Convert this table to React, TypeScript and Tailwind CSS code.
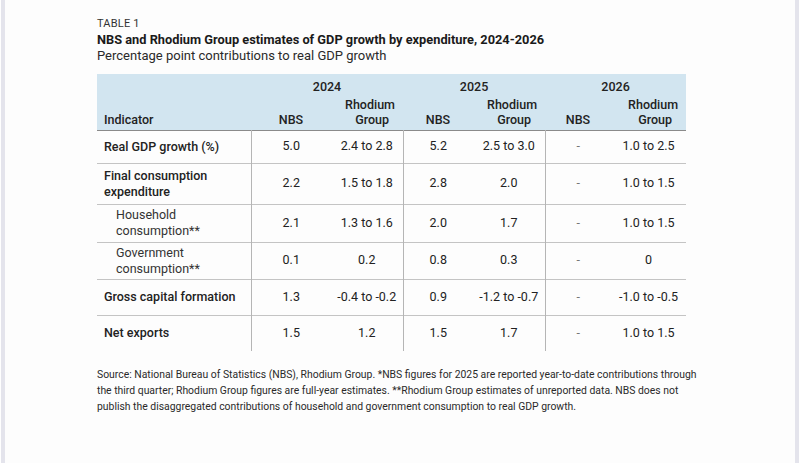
import React from 'react';

interface Row {
  label: string[];
  bold?: boolean;
  indent?: boolean;
  values: string[];
  h: string;
}

const rows: Row[] = [
  { label: ['Real GDP growth (%)'], bold: true, values: ['5.0', '2.4 to 2.8', '5.2', '2.5 to 3.0', '-', '1.0 to 2.5'], h: 'h-[33px]' },
  { label: ['Final consumption', 'expenditure'], bold: true, values: ['2.2', '1.5 to 1.8', '2.8', '2.0', '-', '1.0 to 1.5'], h: 'h-[41px]' },
  { label: ['Household', 'consumption**'], indent: true, values: ['2.1', '1.3 to 1.6', '2.0', '1.7', '-', '1.0 to 1.5'], h: 'h-[38px]' },
  { label: ['Government', 'consumption**'], indent: true, values: ['0.1', '0.2', '0.8', '0.3', '-', '0'], h: 'h-[37px]' },
  { label: ['Gross capital formation'], bold: true, values: ['1.3', '-0.4 to -0.2', '0.9', '-1.2 to -0.7', '-', '-1.0 to -0.5'], h: 'h-[36px]' },
  { label: ['Net exports'], bold: true, values: ['1.5', '1.2', '1.5', '1.7', '-', '1.0 to 1.5'], h: 'h-[36px]' },
];

// group boundary columns get a right border
const groupEnd = [false, true, false, true, false, false];

export default function App() {
  return (
    <div className="w-[800px] h-[463px] bg-[#fdfdfd] flex text-[#222]" style={{ fontFamily: 'Roboto, "Liberation Sans", sans-serif' }}>
      <div className="w-px bg-white" />
      <div className="w-1 bg-[#e4e4ec]" />
      <div className="flex-1 pl-[92px] pt-[17px]">
        <div className="text-[11px] leading-[14px] text-[#333] tracking-[0.2px]">TABLE 1</div>
        <div className="text-[12.8px] leading-[16px] font-bold text-[#1a1a1a] mt-[1px]">
          NBS and Rhodium Group estimates of GDP growth by expenditure, 2024-2026
        </div>
        <div className="text-[13px] leading-[16px] text-[#2a2a2a]">Percentage point contributions to real GDP growth</div>

        <table className="mt-[10px] border-collapse table-fixed w-[589px] text-[12.5px] text-[#222]">
          <colgroup>
            <col className="w-[154px]" />
            <col className="w-[80px]" />
            <col className="w-[72px]" />
            <col className="w-[70px]" />
            <col className="w-[72px]" />
            <col className="w-[66px]" />
            <col className="w-[75px]" />
          </colgroup>
          <thead className="bg-[#d2e5f0] font-medium">
            <tr className="h-[20px]">
              <th />
              {['2024', '2025', '2026'].map((y) => (
                <th key={y} colSpan={2} className="font-medium text-center align-bottom leading-[15px]">
                  {y}
                </th>
              ))}
            </tr>
            <tr className="h-[36px] border-b border-[#8a8a8a]">
              <th className="font-medium text-left align-bottom pl-[7px] pb-[3px] leading-[15px]">Indicator</th>
              {[0, 1, 2].map((i) => (
                <React.Fragment key={i}>
                  <th className="font-medium text-center align-bottom pb-[3px] leading-[15px]">NBS</th>
                  <th className="font-medium text-right align-bottom pb-[3px] pr-[8px] leading-[15px]">
                    Rhodium
                    <br />
                    <span className="pr-[6px]">Group</span>
                  </th>
                </React.Fragment>
              ))}
            </tr>
          </thead>
          <tbody>
            {rows.map((r, ri) => (
              <tr key={ri} className={`${r.h} ${ri < rows.length - 1 ? 'border-b border-[#c4c4c4]' : ''}`}>
                <td
                  className={`border-r border-[#b5b5b5] align-middle leading-[16px] ${r.indent ? 'pl-[19px] font-normal text-[#333]' : 'pl-[7px] font-medium'}`}
                >
                  {r.label.map((l) => (
                    <div key={l}>{l}</div>
                  ))}
                </td>
                {r.values.map((v, vi) => (
                  <td
                    key={vi}
                    className={`text-center align-middle ${groupEnd[vi] ? 'border-r border-[#b5b5b5]' : ''} ${v === '-' ? 'text-[#777]' : ''}`}
                  >
                    {v}
                  </td>
                ))}
              </tr>
            ))}
          </tbody>
        </table>

        <div className="mt-[16px] w-[606px] text-[10.4px] leading-[16px] text-[#2a2a2a]">
          Source: National Bureau of Statistics (NBS), Rhodium Group. *NBS figures for 2025 are reported year-to-date contributions through
          the third quarter; Rhodium Group figures are full-year estimates. **Rhodium Group estimates of unreported data. NBS does not
          publish the disaggregated contributions of household and government consumption to real GDP growth.
        </div>
      </div>
      <div className="w-1 bg-[#e4e4ec]" />
      <div className="w-px bg-white" />
    </div>
  );
}
